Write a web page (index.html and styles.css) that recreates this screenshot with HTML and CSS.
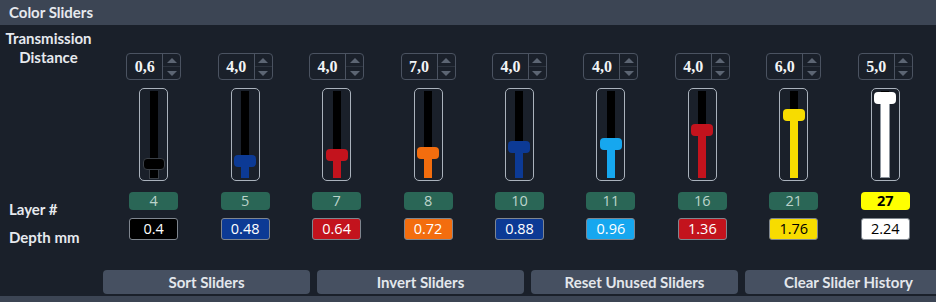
FILE: index.html
```html
<!DOCTYPE html>
<html>
<head>
<meta charset="utf-8">
<link rel="stylesheet" href="styles.css">
</head>
<body>
<div class="header">Color Sliders</div>
<div class="main">
  <div class="labels">
    <div class="lbl-td">Transmission<br>Distance</div>
    <div class="lbl-layer">Layer #</div>
    <div class="lbl-depth">Depth mm</div>
  </div>
  <div class="cols">
    <div class="col c-black">
      <div class="spin"><span class="val">0,6</span><span class="arrows"><i class="up"></i><i class="down"></i></span></div>
      <div class="slider"><div class="track"><div class="above" style="height:67px"></div><div class="handle"></div><div class="stem"></div></div></div>
      <div class="layer">4</div>
      <div class="depth">0.4</div>
    </div>
    <div class="col c-blue">
      <div class="spin"><span class="val">4,0</span><span class="arrows"><i class="up"></i><i class="down"></i></span></div>
      <div class="slider"><div class="track"><div class="above" style="height:64px"></div><div class="handle"></div><div class="stem"></div></div></div>
      <div class="layer">5</div>
      <div class="depth">0.48</div>
    </div>
    <div class="col c-red">
      <div class="spin"><span class="val">4,0</span><span class="arrows"><i class="up"></i><i class="down"></i></span></div>
      <div class="slider"><div class="track"><div class="above" style="height:58px"></div><div class="handle"></div><div class="stem"></div></div></div>
      <div class="layer">7</div>
      <div class="depth">0.64</div>
    </div>
    <div class="col c-orange">
      <div class="spin"><span class="val">7,0</span><span class="arrows"><i class="up"></i><i class="down"></i></span></div>
      <div class="slider"><div class="track"><div class="above" style="height:56px"></div><div class="handle"></div><div class="stem"></div></div></div>
      <div class="layer">8</div>
      <div class="depth">0.72</div>
    </div>
    <div class="col c-blue">
      <div class="spin"><span class="val">4,0</span><span class="arrows"><i class="up"></i><i class="down"></i></span></div>
      <div class="slider"><div class="track"><div class="above" style="height:50px"></div><div class="handle"></div><div class="stem"></div></div></div>
      <div class="layer">10</div>
      <div class="depth">0.88</div>
    </div>
    <div class="col c-sky">
      <div class="spin"><span class="val">4,0</span><span class="arrows"><i class="up"></i><i class="down"></i></span></div>
      <div class="slider"><div class="track"><div class="above" style="height:47px"></div><div class="handle"></div><div class="stem"></div></div></div>
      <div class="layer">11</div>
      <div class="depth">0.96</div>
    </div>
    <div class="col c-red">
      <div class="spin"><span class="val">4,0</span><span class="arrows"><i class="up"></i><i class="down"></i></span></div>
      <div class="slider"><div class="track"><div class="above" style="height:33px"></div><div class="handle"></div><div class="stem"></div></div></div>
      <div class="layer">16</div>
      <div class="depth">1.36</div>
    </div>
    <div class="col c-yellow">
      <div class="spin"><span class="val">6,0</span><span class="arrows"><i class="up"></i><i class="down"></i></span></div>
      <div class="slider"><div class="track"><div class="above" style="height:18px"></div><div class="handle"></div><div class="stem"></div></div></div>
      <div class="layer">21</div>
      <div class="depth">1.76</div>
    </div>
    <div class="col c-white">
      <div class="spin"><span class="val">5,0</span><span class="arrows"><i class="up"></i><i class="down"></i></span></div>
      <div class="slider"><div class="track"><div class="above" style="height:1px"></div><div class="handle"></div><div class="stem"></div></div></div>
      <div class="layer active">27</div>
      <div class="depth">2.24</div>
    </div>
  </div>
</div>
<div class="buttons">
  <button class="btn">Sort Sliders</button>
  <button class="btn">Invert Sliders</button>
  <button class="btn">Reset Unused Sliders</button>
  <button class="btn">Clear Slider History</button>
</div>
<div class="footer"></div>
</body>
</html>
```
FILE: styles.css
```css
* { box-sizing: border-box; }
html, body {
  margin: 0;
  padding: 0;
  width: 936px;
  height: 302px;
  overflow: hidden;
  background: #1a202a;
  font-family: Lato, "Open Sans", sans-serif;
  color: #e3e7ec;
}
.header {
  height: 25px;
  background: #3c4554;
  padding-left: 9px;
  font-weight: bold;
  font-size: 15px;
  line-height: 25px;
  color: #e6e9ee;
}
.main {
  display: flex;
  height: 215px;
}
.labels {
  width: 108px;
  flex-shrink: 0;
  padding-top: 4px;
  font-weight: bold;
  font-size: 15px;
  line-height: 19px;
  color: #e6e9ee;
}
.lbl-td {
  width: 97px;
  text-align: center;
}
.lbl-layer {
  margin-top: 133px;
  padding-left: 9px;
}
.lbl-depth {
  margin-top: 9px;
  padding-left: 9px;
}
.cols {
  display: flex;
  width: 823px;
  padding-top: 28px;
}
.col {
  flex: 1;
  display: flex;
  flex-direction: column;
  align-items: center;
}
.spin {
  width: 55px;
  height: 27px;
  border: 1px solid #4b5361;
  border-radius: 4px;
  display: flex;
}
.val {
  flex: 1;
  text-align: center;
  font-family: "Liberation Serif", serif;
  font-weight: bold;
  font-size: 16px;
  line-height: 25px;
  color: #f2f4f6;
}
.arrows {
  width: 18px;
  border-left: 1px solid #4b5361;
  display: flex;
  flex-direction: column;
}
.arrows i {
  flex: 1;
  display: flex;
  align-items: center;
  justify-content: center;
}
.arrows i.up { border-bottom: 1px solid #2c333e; }
.arrows i::before {
  content: "";
  width: 0;
  height: 0;
  border-left: 5px solid transparent;
  border-right: 5px solid transparent;
}
.arrows i.up::before { border-bottom: 5px solid #5c6573; }
.arrows i.down::before { border-top: 5px solid #5c6573; }

.slider {
  margin-top: 8px;
  width: 29px;
  height: 93px;
  border: 1px solid #aab2bc;
  border-radius: 5px;
  padding: 2px 0;
  display: flex;
  justify-content: center;
}
.track {
  width: 22px;
  display: flex;
  flex-direction: column;
  align-items: center;
}
.above {
  width: 8px;
  background: #000;
  flex-shrink: 0;
}
.handle {
  width: 22px;
  height: 12px;
  border-radius: 4px;
  flex-shrink: 0;
  background: var(--c);
}
.stem {
  width: 8px;
  flex: 1;
  background: var(--c);
}
.layer {
  margin-top: 11px;
  width: 49px;
  height: 18px;
  border-radius: 4px;
  background: #2a6656;
  color: #bcd4cb;
  font-family: "Open Sans", sans-serif;
  font-size: 14.5px;
  line-height: 18px;
  text-align: center;
}
.layer.active {
  background: #ffff00;
  color: #000;
  font-weight: bold;
}
.depth {
  margin-top: 8px;
  width: 49px;
  height: 22px;
  border: 1px solid #7f868f;
  border-radius: 3px;
  background: var(--c);
  color: var(--t);
  font-family: "Open Sans", sans-serif;
  font-size: 14.5px;
  line-height: 20px;
  text-align: center;
}
.c-black { --c: #000000; --t: #ffffff; }
.c-black .handle { border: 1px solid #3a3f46; }
.c-black .stem { box-shadow: 0 0 0 1px #3a3f46; }
.c-blue { --c: #0c3a95; --t: #ffffff; }
.c-red { --c: #c3131d; --t: #ffffff; }
.c-orange { --c: #f36d0e; --t: #ffffff; }
.c-sky { --c: #16a7ef; --t: #ffffff; }
.c-yellow { --c: #f7dc00; --t: #000000; }
.c-white { --c: #ffffff; --t: #000000; }
.c-white .stem { border: 1px solid #8e969f; border-top: none; width: 10px; }

.buttons {
  display: flex;
  gap: 7px;
  padding-left: 103px;
  margin-top: 30px;
  height: 24px;
  overflow: hidden;
  width: 936px;
}
.btn {
  flex: 0 0 207px;
  height: 24px;
  border: none;
  border-radius: 4px;
  background: #465061;
  color: #e3e7ec;
  font-family: Lato, "Open Sans", sans-serif;
  font-weight: bold;
  font-size: 15px;
  padding: 0;
}
.footer {
  margin-top: 2px;
  height: 6px;
  background: #3c4554;
}
```
